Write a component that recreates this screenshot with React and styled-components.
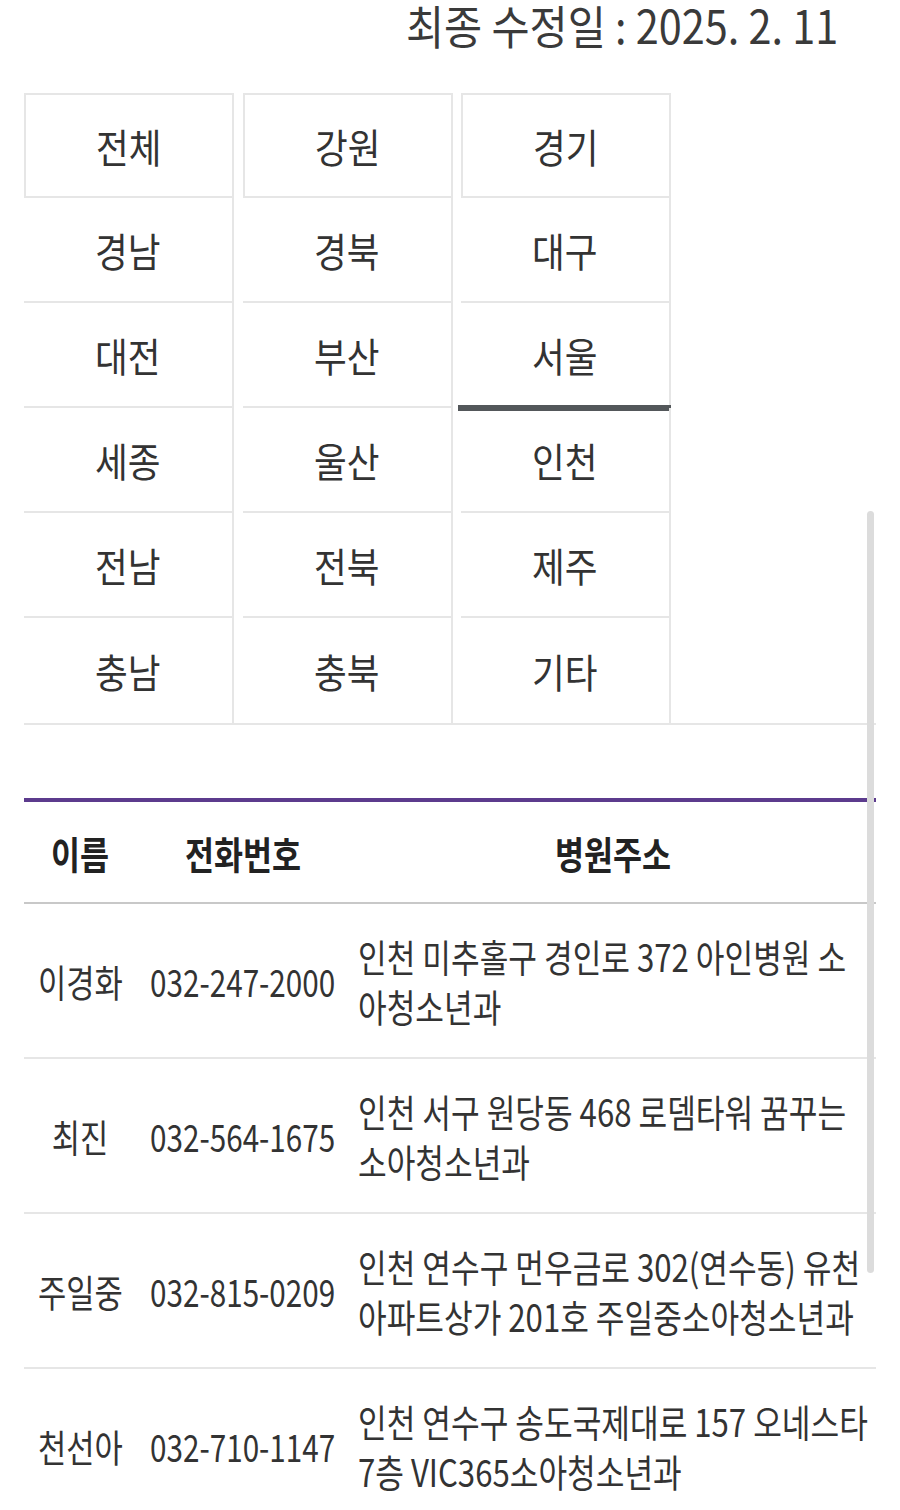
import React from 'react';
import styled, { createGlobalStyle } from 'styled-components';

// the reference uses a narrow phone font, so glyphs are squeezed horizontally
const ADDRESS_SQUEEZE = 0.82;

const GlobalStyle = createGlobalStyle`
  html, body {
    margin: 0;
    padding: 0;
    background: #fff;
    overflow-x: hidden;
  }
  body {
    font-family: "Noto Sans CJK KR", "Noto Sans", sans-serif;
    color: #333;
  }
`;

const REGIONS = [
  '전체', '강원', '경기',
  '경남', '경북', '대구',
  '대전', '부산', '서울',
  '세종', '울산', '인천',
  '전남', '전북', '제주',
  '충남', '충북', '기타',
];

const DOCTORS = [
  {
    name: '이경화',
    phone: '032-247-2000',
    address: '인천 미추홀구 경인로 372 아인병원 소아청소년과',
  },
  {
    name: '최진',
    phone: '032-564-1675',
    address: '인천 서구 원당동 468 로뎀타워 꿈꾸는 소아청소년과',
  },
  {
    name: '주일중',
    phone: '032-815-0209',
    address: '인천 연수구 먼우금로 302(연수동) 유천 아파트상가 201호 주일중소아청소년과',
  },
  {
    name: '천선아',
    phone: '032-710-1147',
    address: '인천 연수구 송도국제대로 157 오네스타 7층 VIC365소아청소년과',
  },
];

const Page = styled.div`
  position: relative;
  padding: 0 24px;
`;

// bleed: negative side margins so a text wider than its cell still centres
const Squeeze = styled.span`
  display: inline-block;
  white-space: nowrap;
  margin: 0 ${({ bleed }) => (bleed ? `-${bleed}px` : '0')};
  transform: scaleX(${({ scale }) => scale || 0.8});
  transform-origin: ${({ origin }) => origin || 'center'};
`;

const UpdatedDate = styled.div`
  height: 52px;
  padding-right: 38px;
  text-align: right;
  font-size: 46px;
  line-height: 48px;
  color: #3a3a3a;
`;

const RegionTabs = styled.ul`
  display: grid;
  grid-template-columns: repeat(3, 210px);
  column-gap: 8.5px;
  margin: 41px 0 0;
  padding: 0;
  list-style: none;
  border-bottom: 2px solid #e6e6e6;
`;

const Tab = styled.li`
  position: relative;
  box-sizing: border-box;
  height: 105px;
  display: flex;
  align-items: center;
  justify-content: center;
  font-size: 40px;
  color: #333;
  border-right: 2px solid #e6e6e6;
  border-bottom: ${({ last }) => (last ? 'none' : '2px solid #e6e6e6')};
  ${({ first }) =>
    first &&
    `
    border-top: 2px solid #e6e6e6;
    border-left: 2px solid #e6e6e6;
  `}
  ${({ active }) =>
    active &&
    `
    &::after {
      content: '';
      position: absolute;
      left: -3px;
      right: -2px;
      bottom: -5px;
      height: 6px;
      background: #53575a;
    }
  `}
`;

const Table = styled.table`
  width: 100%;
  margin-top: 73px;
  border-collapse: collapse;
  border-top: 4px solid #5c3b8d;
  table-layout: fixed;
`;

const HeadRow = styled.tr`
  height: 103px;
  border-bottom: 2px solid #c8c8c8;
`;

const Th = styled.th`
  width: ${({ w }) => w || 'auto'};
  padding: 0;
  font-size: 38px;
  font-weight: 700;
  color: #222;
  text-align: center;
`;

const Row = styled.tr`
  height: 155px;
  border-bottom: 2px solid #e6e6e6;
`;

const Cell = styled.td`
  padding: 0;
  font-size: 38px;
  color: #333;
  text-align: center;
  vertical-align: middle;
`;

const AddressCell = styled(Cell)`
  padding: 0 4px 0 8px;
  text-align: left;
`;

const AddressText = styled.div`
  width: calc(100% / ${ADDRESS_SQUEEZE});
  line-height: 50px;
  transform: scaleX(${ADDRESS_SQUEEZE});
  transform-origin: left center;
  word-break: break-all;
`;

const ScrollThumb = styled.div`
  position: absolute;
  left: 867px;
  top: 511px;
  width: 7px;
  height: 762px;
  border-radius: 4px;
  background: #dcdcdc;
`;

export default function App() {
  return (
    <Page>
      <GlobalStyle />
      <UpdatedDate>
        <Squeeze origin="right" scale={0.9}>
          최종 수정일 : 2025. 2. 11
        </Squeeze>
      </UpdatedDate>
      <RegionTabs>
        {REGIONS.map((region, i) => (
          <Tab
            key={region}
            first={i < 3}
            last={i >= REGIONS.length - 3}
            active={region === '서울'}
          >
            <Squeeze scale={0.89}>{region}</Squeeze>
          </Tab>
        ))}
      </RegionTabs>
      <Table>
        <thead>
          <HeadRow>
            <Th w="112px">
              <Squeeze scale={0.83}>이름</Squeeze>
            </Th>
            <Th w="214px">
              <Squeeze scale={0.83}>전화번호</Squeeze>
            </Th>
            <Th>
              <Squeeze scale={0.83}>병원주소</Squeeze>
            </Th>
          </HeadRow>
        </thead>
        <tbody>
          {DOCTORS.map(doc => (
            <Row key={doc.name}>
              <Cell>
                <Squeeze scale={0.81} bleed={20}>
                  {doc.name}
                </Squeeze>
              </Cell>
              <Cell>
                <Squeeze scale={0.78} bleed={40}>
                  {doc.phone}
                </Squeeze>
              </Cell>
              <AddressCell>
                <AddressText>{doc.address}</AddressText>
              </AddressCell>
            </Row>
          ))}
        </tbody>
      </Table>
      <ScrollThumb />
    </Page>
  );
}
